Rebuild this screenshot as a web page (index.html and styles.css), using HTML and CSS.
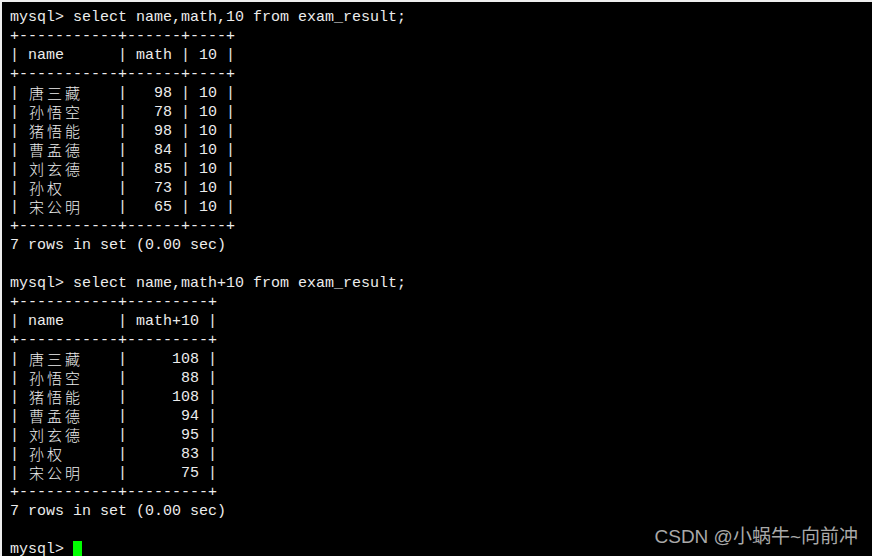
FILE: index.html
```html
<!DOCTYPE html>
<html>
<head>
<meta charset="utf-8">
<link rel="stylesheet" href="styles.css">
</head>
<body>
<div class="term">
<div class="ln">mysql&gt; select name,math,10 from exam_result;</div>
<div class="ln">+-----------+------+----+</div>
<div class="ln">| name      | math | 10 |</div>
<div class="ln">+-----------+------+----+</div>
<div class="ln">| <span class="c">唐三藏</span>    |   98 | 10 |</div>
<div class="ln">| <span class="c">孙悟空</span>    |   78 | 10 |</div>
<div class="ln">| <span class="c">猪悟能</span>    |   98 | 10 |</div>
<div class="ln">| <span class="c">曹孟德</span>    |   84 | 10 |</div>
<div class="ln">| <span class="c">刘玄德</span>    |   85 | 10 |</div>
<div class="ln">| <span class="c">孙权</span>      |   73 | 10 |</div>
<div class="ln">| <span class="c">宋公明</span>    |   65 | 10 |</div>
<div class="ln">+-----------+------+----+</div>
<div class="ln">7 rows in set (0.00 sec)</div>
<div class="ln"> </div>
<div class="ln">mysql&gt; select name,math+10 from exam_result;</div>
<div class="ln">+-----------+---------+</div>
<div class="ln">| name      | math+10 |</div>
<div class="ln">+-----------+---------+</div>
<div class="ln">| <span class="c">唐三藏</span>    |     108 |</div>
<div class="ln">| <span class="c">孙悟空</span>    |      88 |</div>
<div class="ln">| <span class="c">猪悟能</span>    |     108 |</div>
<div class="ln">| <span class="c">曹孟德</span>    |      94 |</div>
<div class="ln">| <span class="c">刘玄德</span>    |      95 |</div>
<div class="ln">| <span class="c">孙权</span>      |      83 |</div>
<div class="ln">| <span class="c">宋公明</span>    |      75 |</div>
<div class="ln">+-----------+---------+</div>
<div class="ln">7 rows in set (0.00 sec)</div>
<div class="ln"> </div>
<div class="ln">mysql&gt; <span class="cursor"></span></div>
<div class="mark">CSDN @小蜗牛~向前冲</div>
</div>
</body>
</html>
```
FILE: styles.css
```css
html, body {
  margin: 0;
  padding: 0;
  background: #000;
  overflow: hidden;
}
.term {
  position: relative;
  width: 872px;
  height: 556px;
  box-sizing: border-box;
  background: #000;
  border-left: 2px solid #eeeeee;
  border-top: 2px solid #eeeeee;
  padding: 6px 0 0 8px;
  color: #ececec;
  font-family: "Liberation Mono", "DejaVu Sans Mono", monospace;
  font-size: 15px;
}
.ln {
  height: 19px;
  line-height: 19px;
  white-space: pre;
}
.c {
  display: inline-block;
  height: 19px;
  padding-left: 1px;
  margin-right: -1px;
  font-family: "Noto Sans CJK SC", sans-serif;
  font-size: 15px;
  font-weight: 300;
  letter-spacing: 3px;
  line-height: 18px;
  vertical-align: top;
}
.cursor {
  display: inline-block;
  width: 9px;
  height: 17px;
  background: #00ff00;
  vertical-align: top;
  margin-top: 1px;
}
.mark {
  position: absolute;
  right: 14px;
  top: 523px;
  font-family: "Liberation Sans", "Noto Sans CJK SC", sans-serif;
  font-size: 19px;
  color: #a9a9a9;
  line-height: 24px;
}
```
